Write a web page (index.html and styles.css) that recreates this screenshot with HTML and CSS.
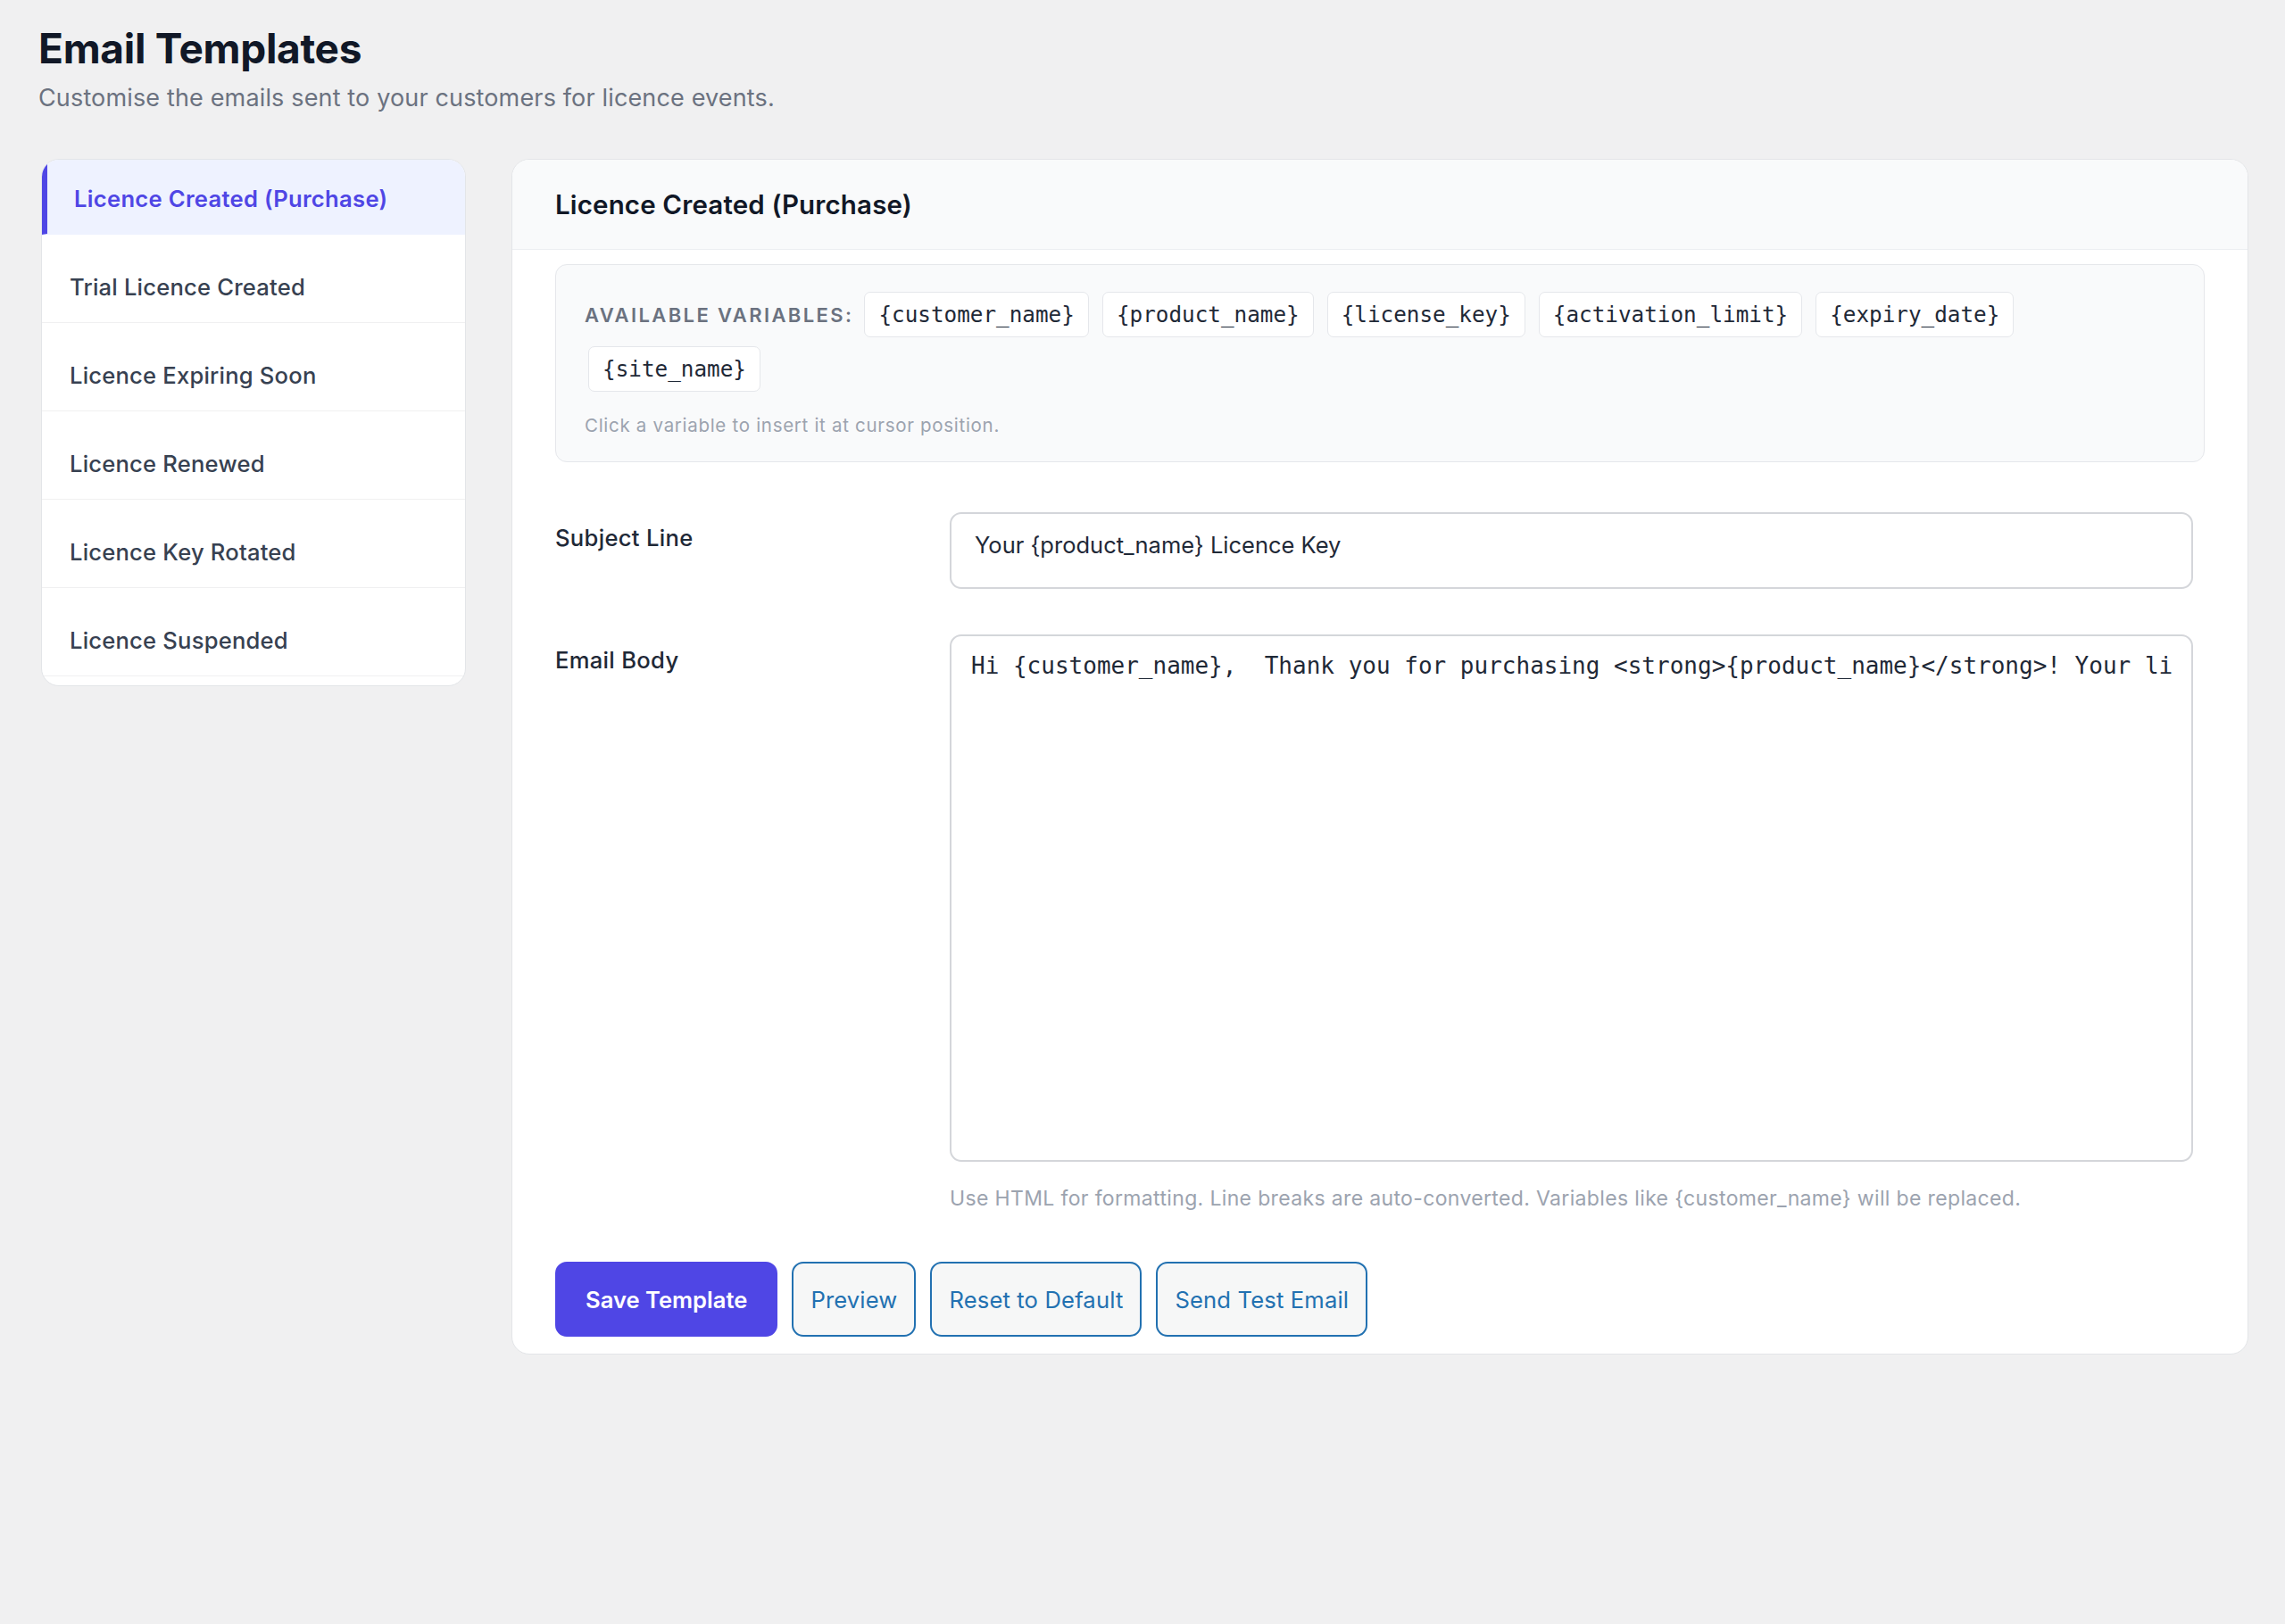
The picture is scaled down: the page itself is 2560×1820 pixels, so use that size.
FILE: index.html
```html
<!DOCTYPE html>
<html lang="en">
<head>
<meta charset="utf-8">
<title>Email Templates</title>
<link rel="stylesheet" href="styles.css">
</head>
<body>
<div class="page">
  <header class="page-head">
    <h1 class="page-title">Email Templates</h1>
    <p class="page-sub">Customise the emails sent to your customers for licence events.</p>
  </header>
  <div class="layout">
    <nav class="side">
      <ul class="side-list">
        <li class="side-item"><a class="side-link is-active" href="#">Licence Created (Purchase)</a></li>
        <li class="side-item"><a class="side-link" href="#">Trial Licence Created</a></li>
        <li class="side-item"><a class="side-link" href="#">Licence Expiring Soon</a></li>
        <li class="side-item"><a class="side-link" href="#">Licence Renewed</a></li>
        <li class="side-item"><a class="side-link" href="#">Licence Key Rotated</a></li>
        <li class="side-item"><a class="side-link" href="#">Licence Suspended</a></li>
      </ul>
    </nav>
    <section class="panel">
      <div class="panel-head">
        <h2 class="panel-title">Licence Created (Purchase)</h2>
      </div>
      <div class="panel-body">
        <div class="vars">
          <div class="vars-row">
            <span class="vars-label">Available Variables:</span>
            <code class="var">{customer_name}</code>
            <code class="var">{product_name}</code>
            <code class="var">{license_key}</code>
            <code class="var">{activation_limit}</code>
            <code class="var">{expiry_date}</code>
            <code class="var">{site_name}</code>
          </div>
          <p class="vars-hint">Click a variable to insert it at cursor position.</p>
        </div>
        <div class="form">
          <label class="form-label" for="subject">Subject Line</label>
          <div class="form-field">
            <input class="input" id="subject" type="text" value="Your {product_name} Licence Key">
          </div>
          <label class="form-label" for="body">Email Body</label>
          <div class="form-field">
            <div class="textarea-box">
              <textarea class="textarea" id="body" wrap="off">Hi {customer_name},  Thank you for purchasing &lt;strong&gt;{product_name}&lt;/strong&gt;! Your licence key is: {license_key}</textarea>
            </div>
            <p class="help">Use HTML for formatting. Line breaks are auto-converted. Variables like {customer_name} will be replaced.</p>
          </div>
        </div>
        <div class="actions">
          <button class="btn btn-primary" type="button">Save Template</button>
          <button class="btn btn-secondary" type="button">Preview</button>
          <button class="btn btn-secondary" type="button">Reset to Default</button>
          <button class="btn btn-secondary" type="button">Send Test Email</button>
        </div>
      </div>
    </section>
  </div>
</div>
</body>
</html>
```

FILE: styles.css
```css
* { box-sizing: border-box; }

html, body {
  margin: 0;
  padding: 0;
  background: #f0f0f1;
  font-family: Inter, "Noto Sans", "Liberation Sans", sans-serif;
  color: #1f2937;
}

.page {
  padding: 26px 41px 80px 43px;
}

.page-title {
  margin: 0;
  font-size: 46px;
  line-height: 56px;
  font-weight: 700;
  color: #111827;
  letter-spacing: -0.3px;
}

.page-sub {
  margin: 10px 0 0;
  font-size: 27px;
  line-height: 36px;
  letter-spacing: 0.15px;
  color: #6b7280;
}

.layout {
  display: flex;
  align-items: flex-start;
  gap: 51px;
  margin: 50px 0 0 3px;
}

/* Sidebar */
.side {
  flex: 0 0 476px;
  background: #fff;
  border: 1px solid #e3e5e8;
  border-radius: 20px;
  overflow: hidden;
}

.side-list {
  list-style: none;
  margin: 0;
  padding: 0;
}

.side-item {
  margin: 0 0 15px;
}

.side-item:last-child {
  margin-bottom: 10px;
}

.side-link {
  display: block;
  padding: 26px 20px 21px 31px;
  font-size: 25.6px;
  line-height: 36px;
  letter-spacing: 0.2px;
  font-weight: 500;
  color: #374151;
  text-decoration: none;
  border-bottom: 1px solid #f0f0f1;
}

.side-link.is-active {
  border-left: 6px solid #4f46e5;
  padding-left: 30px;
  background: #eef2ff;
  color: #4f46e5;
  font-weight: 600;
  letter-spacing: 0.3px;
  border-bottom-color: #eef2ff;
}

/* Panel */
.panel {
  flex: 1 1 auto;
  min-width: 0;
  background: #fff;
  border: 1px solid #e3e5e8;
  border-radius: 20px;
  overflow: hidden;
}

.panel-head {
  background: #f9fafb;
  border-bottom: 1px solid #eceef1;
  padding: 30px 48px;
}

.panel-title {
  margin: 0;
  font-size: 29.5px;
  line-height: 40px;
  letter-spacing: 0.15px;
  font-weight: 600;
  color: #111827;
}

.panel-body {
  padding: 16px 48px 19px;
}

/* Variables */
.vars {
  background: #f9fafb;
  border: 1px solid #e5e7eb;
  border-radius: 13px;
  padding: 30px 32px 26px;
}

.vars-row {
  display: flex;
  flex-wrap: wrap;
  align-items: center;
  gap: 10px 11px;
}

.vars-label {
  margin-right: -3px;
  font-size: 22px;
  line-height: 30px;
  font-weight: 600;
  letter-spacing: 2.4px;
  text-transform: uppercase;
  color: #6b7280;
}

.var {
  margin-left: 4px;
  padding: 8px 15px;
  font-family: "DejaVu Sans Mono", "Liberation Mono", monospace;
  font-size: 24.3px;
  line-height: 33px;
  color: #1f2937;
  background: #fff;
  border: 1px solid #e5e7eb;
  border-radius: 7px;
}

.vars-hint {
  margin: 24px 0 0;
  font-size: 20.5px;
  line-height: 28px;
  letter-spacing: 0.7px;
  color: #9ca3af;
}

/* Form */
.form {
  display: grid;
  grid-template-columns: 442px 1393px;
  row-gap: 51px;
  margin-top: 56px;
}

.form-label {
  padding-top: 11px;
  font-size: 25.6px;
  line-height: 36px;
  letter-spacing: 0.3px;
  font-weight: 500;
  color: #1f2937;
}

.input {
  display: block;
  width: 100%;
  height: 86px;
  margin: 0;
  padding: 19px 26px 32px;
  font-family: Inter, "Noto Sans", sans-serif;
  font-size: 25.5px;
  color: #1f2937;
  background: #fff;
  border: 2px solid #d4d6da;
  border-radius: 13px;
  outline: none;
}

.textarea-box {
  height: 591px;
  padding: 14px 22px;
  background: #fff;
  border: 2px solid #d4d6da;
  border-radius: 13px;
}

.textarea {
  display: block;
  width: 100%;
  height: 100%;
  margin: 0;
  padding: 0;
  overflow: hidden;
  resize: none;
  white-space: pre;
  font-family: "DejaVu Sans Mono", "Liberation Mono", monospace;
  font-size: 26px;
  line-height: 39px;
  color: #1f2937;
  background: transparent;
  border: 0;
  outline: none;
}

.help {
  margin: 25px 0 0;
  font-size: 23px;
  line-height: 32px;
  letter-spacing: 0.35px;
  color: #9ca3af;
}

/* Actions */
.actions {
  display: flex;
  gap: 16px;
  margin-top: 55px;
}

.btn {
  height: 84px;
  padding: 0 19px;
  font-family: Inter, "Noto Sans", sans-serif;
  font-size: 25.6px;
  border-radius: 13px;
  cursor: pointer;
}

.btn-primary {
  padding: 0 32px;
  background: #4f46e5;
  border: 2px solid #4f46e5;
  color: #fff;
  font-weight: 600;
}

.btn-secondary {
  background: #f6f7f7;
  border: 2px solid #2271b1;
  color: #2271b1;
  font-weight: 400;
  letter-spacing: 0.15px;
}
```
